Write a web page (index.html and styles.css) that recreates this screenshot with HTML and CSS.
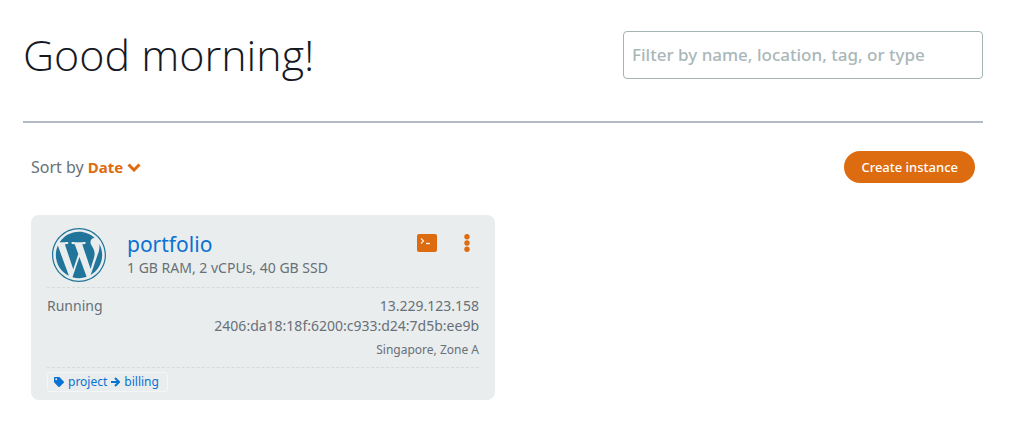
FILE: index.html
```html
<!DOCTYPE html>
<html lang="en">
<head>
<meta charset="utf-8">
<meta name="viewport" content="width=device-width, initial-scale=1">
<title>Instances</title>
<link rel="stylesheet" href="styles.css">
</head>
<body>
<header class="header">
  <h1 class="greeting">Good morning!</h1>
  <input class="filter" type="text" aria-label="Filter instances" placeholder="Filter by name, location, tag, or type">
</header>
<main class="content">
  <div class="toolbar">
    <div class="sort">Sort by
      <button class="sort-button" type="button">Date<svg class="chevron" viewBox="0 0 14 9" aria-hidden="true"><path d="M1.5 1.5 7 7l5.500-5.500" fill="none" stroke="currentColor" stroke-width="3"/></svg></button>
    </div>
    <button class="create" type="button">Create instance</button>
  </div>
  <article class="card">
    <div class="card-head">
      <svg class="logo" viewBox="8 8 496 496" role="img" aria-label="WordPress"><path fill="currentColor" d="M61.7 169.400l101.500 278C92.200 413 43.300 340.200 43.300 256c0-30.900 6.600-60.100 18.400-86.600zm337.900 75.900c0-26.300-9.400-44.500-17.500-58.700-10.800-17.500-20.900-32.400-20.900-49.900 0-19.600 14.800-37.800 35.700-37.800.9 0 1.800.1 2.800.2-37.900-34.700-88.300-55.900-143.700-55.900-74.300 0-139.700 38.100-177.800 95.900 5 .2 9.700.3 13.700.3 22.200 0 56.700-2.700 56.700-2.700 11.500-.7 12.800 16.200 1.400 17.500 0 0-11.500 1.300-24.300 2l77.500 230.400L249.800 247l-33.100-90.800c-11.500-.7-22.300-2-22.300-2-11.500-.7-10.100-18.200 1.300-17.500 0 0 35.100 2.700 56 2.700 22.200 0 56.700-2.700 56.700-2.700 11.500-.7 12.800 16.200 1.400 17.500 0 0-11.500 1.300-24.300 2l76.900 228.700 21.200-70.900c9-29.400 16-50.500 16-68.700zm-139.900 29.300l-63.800 185.500c19.100 5.600 39.200 8.700 60.100 8.700 24.800 0 48.500-4.300 70.600-12.100-.6-.9-1.100-1.900-1.500-2.900l-65.400-179.200zm183-120.700c.9 6.800 1.400 14 1.400 21.900 0 21.600-4 45.800-16.200 76.200l-65 187.900C426.200 403 468.700 334.500 468.700 256c0-37-9.400-71.800-26-102.100zM504 256c0 136.800-111.300 248-248 248C119.200 504 8 392.700 8 256 8 119.200 119.200 8 256 8c136.700 0 248 111.200 248 248zm-11.400 0c0-130.500-106.200-236.600-236.600-236.600C125.500 19.400 19.400 125.500 19.400 256S125.600 492.600 256 492.600c130.500 0 236.600-106.100 236.600-236.600z"/></svg>
      <div class="summary">
        <a class="name" href="#portfolio">portfolio</a>
        <p class="specs">1 GB RAM, 2 vCPUs, 40 GB SSD</p>
      </div>
      <div class="actions">
        <button class="icon-button" type="button" aria-label="Connect"><svg width="20" height="18" viewBox="0 0 20 18" aria-hidden="true"><rect width="20" height="18" rx="2" fill="currentColor"/><path d="M4 4.500 6.500 7 4 9.500" fill="none" stroke="#fbe9db" stroke-width="1.300"/><path d="M9 9.500h4" stroke="#fff" stroke-width="1.300"/></svg></button>
        <button class="icon-button" type="button" aria-label="More actions"><svg width="6" height="18" viewBox="0 0 6 18" aria-hidden="true" fill="currentColor"><circle cx="3" cy="2.700" r="2.700"/><circle cx="3" cy="9" r="2.700"/><circle cx="3" cy="15.300" r="2.700"/></svg></button>
      </div>
    </div>
    <div class="card-body">
      <span class="status">Running</span>
      <div class="network">
        <span>13.229.123.158</span>
        <span>2406:da18:18f:6200:c933:d24:7d5b:ee9b</span>
        <span class="zone">Singapore, Zone A</span>
      </div>
    </div>
    <div class="card-foot">
      <a class="tag" href="#project-billing"><svg class="tag-icon" viewBox="0 0 512 512" aria-hidden="true"><path fill="currentColor" fill-rule="evenodd" d="M0 252V48C0 21 21 0 48 0h204c13 0 25 5 34 14l212 212c19 19 19 49 0 68L294 498c-19 19-49 19-68 0L14 286c-9-9-14-21-14-34zM112 64a48 48 0 1 0 0 96 48 48 0 0 0 0-96z"/></svg>project<svg class="arrow" viewBox="0 0 9 10" aria-hidden="true"><path d="M0 5h7M4 1l4 4-4 4" fill="none" stroke="currentColor" stroke-width="2"/></svg>billing</a>
    </div>
  </article>
</main>
</body>
</html>
```
FILE: styles.css
```css
* {
  box-sizing: border-box;
}

body {
  margin: 0;
  padding: 31px 46px 46px 23px;
  background: #fff;
  color: #687078;
  font-family: "Noto Sans", "Open Sans", sans-serif;
  font-size: 14px;
  line-height: 20px;
}

button {
  border: 0;
  padding: 0;
  background: none;
  font: inherit;
  cursor: pointer;
}

a {
  color: #0972d3;
  text-decoration: none;
}

svg {
  display: block;
}

.header {
  display: flex;
  justify-content: space-between;
  align-items: flex-start;
  gap: 24px;
  padding-bottom: 42px;
  border-bottom: 2px solid #b2bac4;
}

.greeting {
  margin: 0;
  color: #16191f;
  font-family: "Open Sans", "Noto Sans", sans-serif;
  font-size: 43px;
  font-weight: 300;
  line-height: 48px;
}

.filter {
  flex: 0 1 360px;
  min-width: 0;
  height: 48px;
  padding: 0 8px 2px;
  border: 1px solid #a2b4b4;
  border-radius: 4px;
  font: 500 17px/24px "Noto Sans", "Open Sans", sans-serif;
}

.filter::placeholder {
  color: #aab7b8;
  opacity: 1;
}

.content {
  padding: 28px 8px 0;
}

.toolbar {
  display: flex;
  justify-content: space-between;
  align-items: center;
  margin-bottom: 32px;
}

.sort {
  font-size: 16px;
}

.sort-button {
  display: inline-flex;
  align-items: center;
  gap: 4px;
  color: #dd6b10;
  font-size: 15px;
  font-weight: 700;
}

.chevron {
  width: 14px;
  height: 9px;
}

.create {
  height: 32px;
  padding: 0 17px;
  border-radius: 16px;
  background: #dd6b10;
  color: #fff;
  font-size: 13px;
  font-weight: 500;
}

.card {
  max-width: 464px;
  padding: 12px 16px 8px;
  border-radius: 8px;
  background: #e9eded;
}

.card-head {
  display: flex;
  height: 61px;
  padding-left: 5px;
  border-bottom: 1px dashed #d5dbdb;
}

.logo {
  width: 54px;
  height: 54px;
  margin-top: 1px;
  color: #21759b;
}

.summary {
  flex: 1;
  padding: 4px 0 0 21px;
}

.name {
  display: block;
  font-size: 21px;
  line-height: 27px;
}

.specs {
  margin: 0;
  font-size: 14px;
}

.actions {
  display: flex;
  align-items: flex-start;
  gap: 27px;
  padding: 7px 9px 0 0;
}

.icon-button {
  color: #dd6b10;
}

.card-body {
  display: flex;
  justify-content: space-between;
  padding: 8px 0 7px;
  border-bottom: 1px dashed #d5dbdb;
}

.network {
  display: flex;
  flex-direction: column;
  align-items: flex-end;
}

.zone {
  margin-top: 4px;
  font-size: 12px;
}

.card-foot {
  display: flex;
  padding-top: 4px;
}

.tag {
  display: flex;
  align-items: center;
  height: 20px;
  padding: 0 8px 0 6px;
  border: 1px solid #f2f6f8;
  border-radius: 3px;
  font-size: 12px;
}

.tag-icon {
  width: 10px;
  height: 10px;
  margin-right: 4px;
}

.arrow {
  width: 9px;
  height: 10px;
  margin: 0 4px;
}
```
